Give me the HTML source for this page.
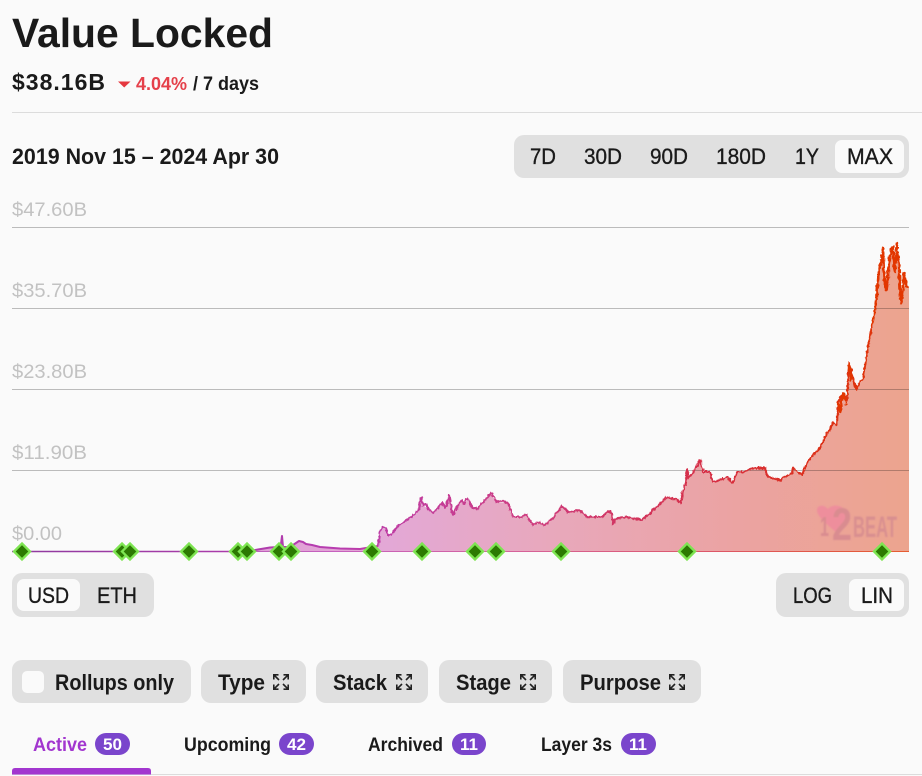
<!DOCTYPE html>
<html lang="en"><head><meta charset="utf-8"><title>Value Locked</title>
<style>
html,body{margin:0;padding:0;background:#fafafa;width:922px;height:776px;overflow:hidden}
svg{display:block}
text{font-family:"Liberation Sans",sans-serif;fill:#1a1a1a}
.b{font-weight:700}
.m{stroke:#1a1a1a;stroke-width:.35px}
.lab{fill:#c2c2c2;font-size:19px}
.btn{fill:#e0e0e0}
.w{fill:#fafafa}
.ic{fill:none;stroke:#222;stroke-width:1.6}
.bt{fill:#fff;font-size:17px;font-weight:700}
</style></head><body>
<svg width="922" height="776" viewBox="0 0 922 776" xmlns="http://www.w3.org/2000/svg">
<defs>
<linearGradient id="f" gradientUnits="userSpaceOnUse" x1="12" y1="0" x2="909" y2="0">
<stop offset="0" stop-color="#d98fd6"/><stop offset=".42" stop-color="#e3a8d6"/><stop offset=".6" stop-color="#e8a8bc"/><stop offset=".8" stop-color="#eba3a3"/><stop offset="1" stop-color="#eca48e"/>
</linearGradient>
<linearGradient id="s" gradientUnits="userSpaceOnUse" x1="12" y1="0" x2="909" y2="0">
<stop offset="0" stop-color="#8e3a9e"/><stop offset=".36" stop-color="#b83cb0"/><stop offset=".55" stop-color="#cc3d86"/><stop offset=".78" stop-color="#d62f45"/><stop offset=".9" stop-color="#dc3018"/><stop offset="1" stop-color="#e23600"/>
</linearGradient>
<filter id="r" filterUnits="userSpaceOnUse" x="360" y="220" width="560" height="340" color-interpolation-filters="sRGB">
<feTurbulence type="fractalNoise" baseFrequency="0.4 0.25" numOctaves="2" seed="7" result="n"/>
<feDisplacementMap in="SourceGraphic" in2="n" scale="3.500" xChannelSelector="R" yChannelSelector="G"/>
<feGaussianBlur stdDeviation=".25"/>
</filter>
<filter id="soft" x="-10%" y="-10%" width="120%" height="120%"><feGaussianBlur stdDeviation=".7"/></filter>
<g id="d"><path d="M0-8L8 0 0 8-8 0Z" fill="#2c7a02" stroke="#7ee552" stroke-width="2.300"/></g>
<g id="x" class="ic"><path d="M.8 5.500V.8H5.500M.8.8L6 6M15.200 5.500V.8H10.500M15.200.8L10 6M.8 10.500V15.200H5.500M.8 15.200L6 10M15.200 10.500V15.200H10.500M15.200 15.200L10 10"/></g>
</defs>

<text class="b" x="12" y="47" font-size="41" textLength="261" lengthAdjust="spacingAndGlyphs">Value Locked</text>
<text class="b" x="12" y="90" font-size="23" textLength="93" lengthAdjust="spacing">$38.16B</text>
<path d="M118 81.500H130.500L124.200 87.500Z" fill="#e5383f"/>
<text class="b" x="136" y="90" font-size="18.500" textLength="51" lengthAdjust="spacingAndGlyphs" style="fill:#e5404a">4.04%</text>
<text class="b" x="193" y="90" font-size="19" textLength="66" lengthAdjust="spacingAndGlyphs">/ 7 days</text>
<rect x="12" y="112" width="910" height="1" fill="#dcdcdc"/>
<text class="b" x="12" y="164" font-size="22" textLength="267" lengthAdjust="spacingAndGlyphs">2019 Nov 15 – 2024 Apr 30</text>

<rect class="btn" x="514" y="135" width="395" height="43" rx="10"/>
<rect class="w" x="835" y="140" width="69" height="33" rx="7"/>
<g font-size="22" class="m">
<text class="m" x="530" y="164" textLength="26" lengthAdjust="spacingAndGlyphs">7D</text>
<text class="m" x="584" y="164" textLength="38" lengthAdjust="spacingAndGlyphs">30D</text>
<text class="m" x="650" y="164" textLength="38" lengthAdjust="spacingAndGlyphs">90D</text>
<text class="m" x="716" y="164" textLength="50" lengthAdjust="spacingAndGlyphs">180D</text>
<text class="m" x="795" y="164" textLength="24" lengthAdjust="spacingAndGlyphs">1Y</text>
<text class="m" x="847" y="164" textLength="46" lengthAdjust="spacingAndGlyphs">MAX</text>
</g>

<text class="lab" x="12" y="216" textLength="75" lengthAdjust="spacingAndGlyphs">$47.60B</text>
<text class="lab" x="12" y="297" textLength="75" lengthAdjust="spacingAndGlyphs">$35.70B</text>
<text class="lab" x="12" y="378" textLength="75" lengthAdjust="spacingAndGlyphs">$23.80B</text>
<text class="lab" x="12" y="459" textLength="75" lengthAdjust="spacingAndGlyphs">$11.90B</text>
<text class="lab" x="12" y="540" textLength="50" lengthAdjust="spacingAndGlyphs">$0.00</text>

<path fill="url(#f)" d="M250 551L258 549.500 270 547.500 279 547 282 536 283 547 290 547 296 543 299 541 303 542 306 544 312 545 320 547 340 548.500 360 549 372 547 378 546 380 530 383 527 386 528 388 535 392 534 397 527 405 521 411 517 417 512 421 499 423 505 428 509 433 513 438 508 442 504 445 508 449 497 453 513 458 505 462 500 464 504 467 500 472 507 477 509 484 501 491 494 497 502 508 503 513 517 522 517 526 514 533 525 537 522 545 525 553 518 562 506 568 512 580 510 587 517 602 517 608 511 612 513 613 525 615 519 627 517 642 520 650 513 662 502 667 497 678 500 681 503 683 490 686 483 687 471 688 478 693 473 700 462 703 472 710 472 713 482 720 480 727 477 733 483 737 472 743 472 753 468 765 468 768 477 780 480 792 473 793 468 802 475 807 463 813 455 820 448 827 434 833 423 837 425 838 405 843 393 847 400 849 365 852 373 856 390 860 382 863 380 867 353 868 347 872 325 875 310 877 292 879 270 883 250 885 287 887 290 891 252 893 250 895 272 897 245 899 263 901 303 903 290 904 275 906 283 909 287V551.500H250Z"/>

<g fill="#000" fill-opacity=".25"><rect x="12" y="227" width="897" height="1"/><rect x="12" y="308" width="897" height="1"/><rect x="12" y="389" width="897" height="1"/><rect x="12" y="470" width="897" height="1"/></g>

<g filter="url(#soft)">
<path fill="#ee8e9c" d="M836 532C826 524 817 516 817 510C817 505 824 504 828 509C832 503 846 505 846 514C846 521 841 527 836 532Z"/>
<text x="820" y="536" font-size="28" font-weight="700" textLength="9" lengthAdjust="spacingAndGlyphs" style="fill:#d98c90">1</text>
<text x="832" y="540" font-size="45" font-weight="700" textLength="20" lengthAdjust="spacingAndGlyphs" style="fill:#d98c90">2</text>
<text x="853" y="537" font-size="30" font-weight="700" textLength="44" lengthAdjust="spacingAndGlyphs" style="fill:#d98f90">BEAT</text>
</g>

<path fill="none" stroke="url(#s)" stroke-width="1.500" d="M12 551.500H250"/>
<path fill="none" stroke="url(#s)" stroke-width="2" stroke-linejoin="round" d="M250 551L258 549.500 270 547.500 279 547 281 544 282 536 283 547 290 547 296 543 299 541 303 542 306 544 312 545 320 547 340 548.500 360 549 372 547 378 546"/>
<path filter="url(#r)" fill="none" stroke="url(#s)" stroke-width="2" stroke-linejoin="round" d="M378 546L380 530 383 527 386 528 388 535 392 534 397 527 405 521 411 517 417 512 419 508 421 497 423 505 426 504 428 509 433 513 438 508 442 502 445 508 447 503 449 495 451 506 453 515 458 505 462 500 464 504 467 498 472 507 477 509 484 501 491 493 497 502 502 501 508 503 513 517 522 517 526 514 533 525 537 522 545 525 553 518 562 506 568 512 580 510 587 517 602 517 608 511 612 513 613 525 615 519 627 517 642 520 650 513 662 502 667 497 678 500 681 503 683 490 686 483 687 469 688 478 693 473 700 460 703 472 710 472 713 482 720 480 727 477 733 483 737 472 743 472 753 468 765 468 768 477 780 480 792 473 793 468 802 475 807 463 813 455 820 448 827 434 833 423 837 425 838 403 843 393 847 400 849 363 852 373 856 390 860 382 863 380 867 353 868 347 872 325 875 310 877 292 879 270 883 248 885 287 887 290 891 250 893 247 895 272 897 243 899 263 901 303 903 290 904 273 906 283 908 287"/>
<path filter="url(#r)" fill="none" stroke="#e23600" stroke-width="2.500" stroke-linejoin="round" d="M838 403L840 412 843 393 847 405M849 363L851 380 852 373M872 325L875 310 877 292 879 270 881 262 883 248 884 280 886 290 888 270 891 250 893 247 894 268 895 272 897 243 898 258 899 263 900 290 901 303 903 290 904 273 906 283 908 288"/>
<path d="M12 551.500H909" stroke="url(#s)" stroke-opacity=".75" stroke-width="1"/>

<use href="#d" x="22" y="551.500"/><use href="#d" x="122" y="551.500"/><use href="#d" x="130" y="551.500"/><use href="#d" x="189" y="551.500"/><use href="#d" x="238" y="551.500"/><use href="#d" x="247" y="551.500"/><use href="#d" x="279" y="551.500"/><use href="#d" x="291" y="551.500"/><use href="#d" x="372" y="551.500"/><use href="#d" x="422" y="551.500"/><use href="#d" x="475" y="551.500"/><use href="#d" x="496" y="551.500"/><use href="#d" x="561" y="551.500"/><use href="#d" x="687" y="551.500"/><use href="#d" x="882" y="551.500"/>

<rect class="btn" x="12" y="573" width="142" height="44" rx="10"/>
<rect class="w" x="17" y="579" width="63" height="32" rx="7"/>
<text class="m" x="28" y="603" font-size="22" textLength="41" lengthAdjust="spacingAndGlyphs">USD</text>
<text class="m" x="97" y="603" font-size="22" textLength="40" lengthAdjust="spacingAndGlyphs">ETH</text>
<rect class="btn" x="776" y="573" width="133" height="44" rx="10"/>
<rect class="w" x="849" y="579" width="55" height="32" rx="7"/>
<text class="m" x="793" y="603" font-size="22" textLength="39" lengthAdjust="spacingAndGlyphs">LOG</text>
<text class="m" x="861" y="603" font-size="22" textLength="32" lengthAdjust="spacingAndGlyphs">LIN</text>

<rect class="btn" x="12" y="660" width="179" height="43" rx="10"/>
<rect class="w" x="22" y="671" width="22" height="22" rx="5"/>
<text class="b" x="55" y="690" font-size="22.500" textLength="119" lengthAdjust="spacingAndGlyphs">Rollups only</text>
<rect class="btn" x="201" y="660" width="105" height="43" rx="10"/>
<text class="b" x="218" y="690" font-size="22.500" textLength="47" lengthAdjust="spacingAndGlyphs">Type</text>
<use href="#x" x="273" y="674"/>
<rect class="btn" x="316" y="660" width="112" height="43" rx="10"/>
<text class="b" x="333" y="690" font-size="22.500" textLength="54" lengthAdjust="spacingAndGlyphs">Stack</text>
<use href="#x" x="396" y="674"/>
<rect class="btn" x="439" y="660" width="113" height="43" rx="10"/>
<text class="b" x="456" y="690" font-size="22.500" textLength="55" lengthAdjust="spacingAndGlyphs">Stage</text>
<use href="#x" x="520" y="674"/>
<rect class="btn" x="563" y="660" width="138" height="43" rx="10"/>
<text class="b" x="580" y="690" font-size="22.500" textLength="81" lengthAdjust="spacingAndGlyphs">Purpose</text>
<use href="#x" x="669" y="674"/>

<text class="b" x="33" y="751" font-size="19.500" textLength="54" lengthAdjust="spacingAndGlyphs" style="fill:#a236cf">Active</text>
<rect x="95" y="733" width="35" height="22" rx="11" fill="#7a45cc"/>
<text class="bt" x="103" y="750" textLength="19" lengthAdjust="spacingAndGlyphs">50</text>
<text class="b" x="184" y="751" font-size="19.500" textLength="87" lengthAdjust="spacingAndGlyphs">Upcoming</text>
<rect x="279" y="733" width="35" height="22" rx="11" fill="#7a45cc"/>
<text class="bt" x="287" y="750" textLength="19" lengthAdjust="spacingAndGlyphs">42</text>
<text class="b" x="368" y="751" font-size="19.500" textLength="75" lengthAdjust="spacingAndGlyphs">Archived</text>
<rect x="452" y="733" width="34" height="22" rx="11" fill="#7a45cc"/>
<text class="bt" x="460" y="750" textLength="18" lengthAdjust="spacingAndGlyphs">11</text>
<text class="b" x="541" y="751" font-size="19.500" textLength="71" lengthAdjust="spacingAndGlyphs">Layer 3s</text>
<rect x="621" y="733" width="35" height="22" rx="11" fill="#7a45cc"/>
<text class="bt" x="629" y="750" textLength="18" lengthAdjust="spacingAndGlyphs">11</text>

<rect x="12" y="774" width="910" height="1" fill="#dcdcdc"/>
<path d="M12 774.500V771Q12 768 15 768H148Q151 768 151 771V774.500Z" fill="#a236cf"/>
</svg>
</body></html>
